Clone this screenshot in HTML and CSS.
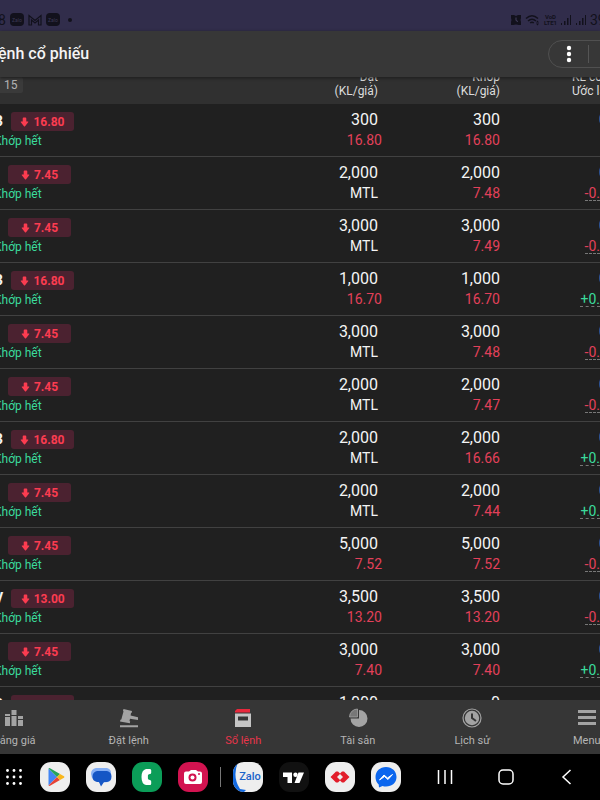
FILE: index.html
```html
<!DOCTYPE html>
<html lang="vi">
<head>
    <meta charset="utf-8">
    <meta name="viewport" content="width=device-width, initial-scale=1">
    <title>Sổ lệnh cổ phiếu</title>
    <link rel="stylesheet" href="styles.css">
</head>
<body>
    <svg class="sprite" aria-hidden="true">
        <symbol id="arrow-down" viewBox="0 0 10 11">
            <path d="M3 1.500Q3 .5 4 .5h2q1 0 1 1V5h1.700q1 0 .4.800L5.600 10.200q-.6.600-1.200 0L.9 5.800Q.3 5 1.300 5H3z" fill="currentColor"/>
        </symbol>
        <symbol id="signal" viewBox="0 0 12 12">
            <path d="M1 9h1v2H1zM4 7h1.500v4H4zM7 4h1.500v7H7zM10 1h1v10h-1z" fill="currentColor"/>
        </symbol>
        <symbol id="zalo-mini" viewBox="0 0 14 14">
            <rect width="14" height="13" rx="4" fill="currentColor"/>
            <text x="7" y="9" text-anchor="middle" font-size="5" fill="#3d3a55">Zalo</text>
        </symbol>
    </svg>

    <div class="status-bar">
        <div class="status-left">
            <span>8</span>
            <svg width="14" height="14"><use href="#zalo-mini"/></svg>
            <svg width="14" height="12" viewBox="0 0 14 12"><path d="M1 11V1.500L7 6.500l6-5V11h-2.500V6L7 9 3.500 6v5z" fill="none" stroke="currentColor" stroke-width="1.200"/></svg>
            <svg width="14" height="14"><use href="#zalo-mini"/></svg>
            <i class="status-dot"></i>
        </div>
        <div class="status-right">
            <svg width="12" height="12" viewBox="0 0 12 12"><path d="M1 1h3l2 1 2-1h3v3l-.5 2 .5 2v3H9l-3-.5L3 11H1V8l.5-2L1 4z" fill="currentColor"/><path d="M6 3.500V6.500l2 1" fill="none" stroke="#45405f"/></svg>
            <svg width="16" height="12" viewBox="0 0 16 12"><path d="M1 4.500Q7-1 13 4.500M3 7q4-3.500 8 0M5.200 9q1.800-1.500 3.600 0" fill="none" stroke="currentColor" stroke-width="1.500"/><path d="M11 8.500L12.500 6.500 14 8.500zM11 9.500h3l-1.500 2z" fill="currentColor"/></svg>
            <span class="volte">VoD<br>LTE1</span>
            <svg width="12" height="12"><use href="#signal"/></svg>
            <svg width="12" height="12"><use href="#signal"/></svg>
            <span>39%</span>
        </div>
    </div>

    <header class="app-header">
        <h1>ệnh cổ phiếu</h1>
        <div class="capsule">
            <button type="button" class="capsule-btn" aria-label="Tùy chọn">
                <svg width="6" height="18" viewBox="0 0 6 18" fill="#fff"><circle cx="3" cy="3" r="2.200"/><circle cx="3" cy="9" r="2.200"/><circle cx="3" cy="15" r="2.200"/></svg>
            </button>
        </div>
    </header>

    <main class="orders">
        <table>
            <colgroup>
                <col>
                <col class="col-order">
                <col class="col-match">
                <col class="col-left">
            </colgroup>
            <thead>
                <tr>
                    <th><span class="count">15</span></th>
                    <th>Đặt<br>(KL/giá)</th>
                    <th>Khớp<br>(KL/giá)</th>
                    <th>KL còn<br>Ước lãi</th>
                </tr>
            </thead>
            <tbody>
                <tr>
                    <td><div class="symbol"><b>B</b><span class="badge"><svg><use href="#arrow-down"/></svg>16.80</span></div><span class="state">Khớp hết</span></td>
                    <td>300<span class="price down">16.80</span></td>
                    <td>300<span class="price down">16.80</span></td>
                    <td><span class="rest">0</span></td>
                </tr>
                <tr>
                    <td><div class="symbol"><b></b><span class="badge"><svg><use href="#arrow-down"/></svg>7.45</span></div><span class="state">Khớp hết</span></td>
                    <td>2,000<span class="price">MTL</span></td>
                    <td>2,000<span class="price down">7.48</span></td>
                    <td><span class="rest">0</span><span class="profit down">-0.</span></td>
                </tr>
                <tr>
                    <td><div class="symbol"><b></b><span class="badge"><svg><use href="#arrow-down"/></svg>7.45</span></div><span class="state">Khớp hết</span></td>
                    <td>3,000<span class="price">MTL</span></td>
                    <td>3,000<span class="price down">7.49</span></td>
                    <td><span class="rest">0</span><span class="profit down">-0.</span></td>
                </tr>
                <tr>
                    <td><div class="symbol"><b>B</b><span class="badge"><svg><use href="#arrow-down"/></svg>16.80</span></div><span class="state">Khớp hết</span></td>
                    <td>1,000<span class="price down">16.70</span></td>
                    <td>1,000<span class="price down">16.70</span></td>
                    <td><span class="rest">0</span><span class="profit up">+0.</span></td>
                </tr>
                <tr>
                    <td><div class="symbol"><b></b><span class="badge"><svg><use href="#arrow-down"/></svg>7.45</span></div><span class="state">Khớp hết</span></td>
                    <td>3,000<span class="price">MTL</span></td>
                    <td>3,000<span class="price down">7.48</span></td>
                    <td><span class="rest">0</span><span class="profit down">-0.</span></td>
                </tr>
                <tr>
                    <td><div class="symbol"><b></b><span class="badge"><svg><use href="#arrow-down"/></svg>7.45</span></div><span class="state">Khớp hết</span></td>
                    <td>2,000<span class="price">MTL</span></td>
                    <td>2,000<span class="price down">7.47</span></td>
                    <td><span class="rest">0</span><span class="profit down">-0.</span></td>
                </tr>
                <tr>
                    <td><div class="symbol"><b>B</b><span class="badge"><svg><use href="#arrow-down"/></svg>16.80</span></div><span class="state">Khớp hết</span></td>
                    <td>2,000<span class="price">MTL</span></td>
                    <td>2,000<span class="price down">16.66</span></td>
                    <td><span class="rest">0</span><span class="profit up">+0.</span></td>
                </tr>
                <tr>
                    <td><div class="symbol"><b></b><span class="badge"><svg><use href="#arrow-down"/></svg>7.45</span></div><span class="state">Khớp hết</span></td>
                    <td>2,000<span class="price">MTL</span></td>
                    <td>2,000<span class="price down">7.44</span></td>
                    <td><span class="rest">0</span><span class="profit up">+0.</span></td>
                </tr>
                <tr>
                    <td><div class="symbol"><b></b><span class="badge"><svg><use href="#arrow-down"/></svg>7.45</span></div><span class="state">Khớp hết</span></td>
                    <td>5,000<span class="price down">7.52</span></td>
                    <td>5,000<span class="price down">7.52</span></td>
                    <td><span class="rest">0</span><span class="profit down">-0.</span></td>
                </tr>
                <tr>
                    <td><div class="symbol"><b>V</b><span class="badge"><svg><use href="#arrow-down"/></svg>13.00</span></div><span class="state">Khớp hết</span></td>
                    <td>3,500<span class="price down">13.20</span></td>
                    <td>3,500<span class="price down">13.20</span></td>
                    <td><span class="rest">0</span><span class="profit down">-0.</span></td>
                </tr>
                <tr>
                    <td><div class="symbol"><b></b><span class="badge"><svg><use href="#arrow-down"/></svg>7.45</span></div><span class="state">Khớp hết</span></td>
                    <td>3,000<span class="price down">7.40</span></td>
                    <td>3,000<span class="price down">7.40</span></td>
                    <td><span class="rest">0</span><span class="profit up">+0.</span></td>
                </tr>
                <tr>
                    <td><div class="symbol"><b>B</b><span class="badge"></span></div></td>
                    <td>1,000</td>
                    <td>0</td>
                    <td></td>
                </tr>
            </tbody>
        </table>
    </main>

    <nav class="tabs">
        <a href="#bang-gia">
            <svg viewBox="0 0 20 20" fill="#a3a3a3"><path d="M1 6h5v2H1zM1 9h5v9H1zM7.500 2h5v5h-5zM7.500 8h5v10h-5zM14 8h5v3h-5zM14 12h5v6h-5z"/></svg>
            Bảng giá
        </a>
        <a href="#dat-lenh">
            <svg viewBox="0 0 20 20" fill="#a3a3a3"><path d="M4.500 1l8.500 2-.3 1.700-.7.300-.4 2.500 7.400 1.800v2.700l-8-1.200-.5 2.200.7.600-.4 1.700L1 13.500l.4-1.700.9-.2L4.500 3.500 4 2.700zM1 17.300h18v2H1z"/></svg>
            Đặt lệnh
        </a>
        <a href="#so-lenh" class="active">
            <svg viewBox="0 0 20 20"><path d="M4 1h13v3.500H2V3z" fill="#e8283c"/><path d="M2 5.500h16V19H2zM5 8.500v4h10v-4z" fill="#c4c4c4" fill-rule="evenodd"/></svg>
            Sổ lệnh
        </a>
        <a href="#tai-san">
            <svg viewBox="0 0 20 20"><path d="M11 2a8.500 8.500 0 1 1-8.500 8.500H11z" fill="#a3a3a3"/><path d="M9.500 1v8H1.500a8 8 0 0 1 8-8z" fill="#777" stroke="#a3a3a3" stroke-width=".8"/></svg>
            Tài sản
        </a>
        <a href="#lich-su">
            <svg viewBox="0 0 20 20"><circle cx="10" cy="10" r="9" fill="none" stroke="#a3a3a3" stroke-width="1.200"/><circle cx="10" cy="10" r="7.200" fill="#a3a3a3"/><path d="M10 5.500V10l4 3" fill="none" stroke="#363636" stroke-width="2"/></svg>
            Lịch sử
        </a>
        <a href="#menu">
            <svg viewBox="0 0 20 20" fill="#a3a3a3"><path d="M1 2h18v3H1zM1 8h18v3H1zM1 14h18v3H1z"/></svg>
            Menu
        </a>
    </nav>

    <div class="taskbar">
        <button type="button" class="drawer" aria-label="Ứng dụng">
            <svg width="20" height="20" viewBox="0 0 20 20" fill="#fff"><circle cx="3.500" cy="3.500" r="1.400"/><circle cx="10" cy="3.500" r="1.400"/><circle cx="16.500" cy="3.500" r="1.400"/><circle cx="3.500" cy="10" r="1.400"/><circle cx="10" cy="10" r="1.400"/><circle cx="16.500" cy="10" r="1.400"/><circle cx="3.500" cy="16.500" r="1.400"/><circle cx="10" cy="16.500" r="1.400"/><circle cx="16.500" cy="16.500" r="1.400"/></svg>
        </button>
        <button type="button" class="app" aria-label="Play Store">
            <svg viewBox="0 0 30 30"><path d="M8.500 6.500v17L17 15z" fill="#4285f4"/><path d="M8.500 6.500q.8-.8 2 0l9.500 5.400-3 3.100z" fill="#27a45a"/><path d="M8.500 23.500q.8.800 2 0l9.500-5.400-3-3.100z" fill="#e64235"/><path d="M20 11.900l4 2.300q.9.800 0 1.600l-4 2.300-3-3.100z" fill="#f9b61b"/></svg>
        </button>
        <button type="button" class="app" aria-label="Messages">
            <svg viewBox="0 0 30 30"><path d="M10 6h11q4 1 4 5v5q0 3-3 4l-8 1-8-5-1-4q0-5 5-6z" fill="#83aef5"/><path d="M11 9h10q4.500 1 4.500 5.500T21 20h-3l-3 4.500-2-4.500h-2q-4.500-1-4.500-5.500T11 9z" fill="#1556c5"/></svg>
        </button>
        <button type="button" class="app phone" aria-label="Phone">
            <svg viewBox="0 0 30 30"><path d="M14 7h4q1.200.2 1.200 1.300v2.500q0 1.200-1.300 1.300-2 .1-2 1.500v3q0 1.400 2 1.500 1.300.1 1.300 1.300v2.300q0 1.300-1.200 1.300h-4q-4.500-1-4.500-8t4.500-8z" fill="#fff"/></svg>
        </button>
        <button type="button" class="app camera" aria-label="Camera">
            <svg viewBox="0 0 30 30"><path d="M8 9.500h3l2-1.500h5l2 1.500h2q2 0 2 2V20q0 2-2 2H8q-2 0-2-2v-8.500q0-2 2-2z" fill="#fff"/><circle cx="14.500" cy="15.500" r="4" fill="#d21350"/><circle cx="14.500" cy="15.500" r="2" fill="#fff"/><circle cx="21" cy="12" r="1" fill="#d21350"/></svg>
        </button>
        <i class="divider"></i>
        <button type="button" class="app" aria-label="Zalo">
            <svg viewBox="0 0 30 30"><path d="M0 0h5Q-1 15 7 27l6 1-2 2H0z" fill="#1269e0"/><text x="17" y="18" text-anchor="middle" font-size="11" font-weight="500" fill="#1b63c9">Zalo</text></svg>
        </button>
        <button type="button" class="app trading" aria-label="TradingView">
            <svg viewBox="0 0 30 30" fill="#fff"><path d="M4 10.500h9V21H8.500v-6H4zM19.500 10.500h5.500L20.500 21H15.500z"/><circle cx="16.500" cy="12.700" r="2.200"/></svg>
        </button>
        <button type="button" class="app" aria-label="Techcombank">
            <svg viewBox="0 0 30 30"><path d="M5.500 15l5.500-5.500h2l2 2 2-2h2l5.500 5.500-5.500 5.500h-2l-2-2-2 2h-2z" fill="#e21d2a"/><path d="M15 12l3 3-3 3-3-3z" fill="#eee"/></svg>
        </button>
        <button type="button" class="app" aria-label="Messenger">
            <svg viewBox="0 0 30 30"><path d="M15 5c6 0 10.500 4.300 10.500 10S21 24.500 15 24.500q-1.800 0-3.500-.5L8 25.500l-.3-3Q4.500 19.500 4.500 15C4.500 9.300 9 5 15 5z" fill="#0b66ee"/><path d="M8.500 18l4.500-5 3.500 3 5-3.500-4.500 5-3.500-3z" fill="#fff" stroke="#fff" stroke-linejoin="round"/></svg>
        </button>
        <div class="sysnav">
            <button type="button" aria-label="Gần đây"><svg width="18" height="18" viewBox="0 0 18 18"><path d="M2.500 2v14M9 2v14M15.500 2v14"/></svg></button>
            <button type="button" aria-label="Trang chủ"><svg width="18" height="18" viewBox="0 0 18 18"><rect x="2" y="2" width="14" height="14" rx="4"/></svg></button>
            <button type="button" aria-label="Quay lại"><svg width="18" height="18" viewBox="0 0 18 18"><path d="M12.500 2L5 9l7.500 7"/></svg></button>
        </div>
    </div>
</body>
</html>
```

FILE: styles.css
```css
* {
    box-sizing: border-box;
}

body {
    display: flex;
    flex-direction: column;
    height: 100vh;
    margin: 0;
    overflow: hidden;
    background: #202020;
    color: #f4f4f4;
    font-family: Roboto, "Noto Sans", sans-serif;
    font-size: 16px;
}

svg {
    flex-shrink: 0;
}

button {
    padding: 0;
    border: 0;
    background: none;
    color: inherit;
    font-family: inherit;
}

.sprite {
    position: absolute;
    width: 0;
    height: 0;
}

/* status bar */
.status-bar {
    display: flex;
    justify-content: space-between;
    flex-shrink: 0;
    height: 31px;
    padding-top: 9px;
    overflow: hidden;
    background: #312d4b;
    color: #12111c;
    font-size: 14px;
}

.status-left,
.status-right {
    display: flex;
    align-items: center;
    height: 22px;
}

.status-left {
    gap: 4px;
    margin-left: -2px;
}

.status-right {
    gap: 3px;
    margin-right: -16px;
}

.status-dot {
    width: 4px;
    height: 4px;
    margin-left: 4px;
    border-radius: 50%;
    background: #12111c;
}

.volte {
    font-size: 6px;
    font-weight: bold;
    line-height: 6px;
    text-align: center;
}

/* title */
.app-header {
    display: flex;
    align-items: center;
    justify-content: space-between;
    flex-shrink: 0;
    height: 46px;
    z-index: 1;
    background: #373737;
    box-shadow: 0 1px 3px #1c1c1c;
}

.app-header h1 {
    margin: 0 0 0 -2px;
    font-size: 16px;
    font-weight: 500;
    line-height: 24px;
}

.capsule {
    width: 82px;
    height: 28px;
    margin-right: -30px;
    border: 1px solid #505050;
    border-radius: 14px;
}

.capsule-btn {
    display: flex;
    align-items: center;
    justify-content: center;
    width: 40px;
    height: 18px;
    margin-top: 4px;
    border-right: 1px solid #555555;
}

/* order list */
.orders {
    flex: 1;
    min-height: 0;
    overflow: hidden;
}

table {
    width: calc(100% + 6px);
    margin: -10px 0 0 -6px;
    table-layout: fixed;
    border-collapse: separate;
    border-spacing: 0;
}

.col-order {
    width: 120px;
}

.col-match {
    width: 122px;
}

.col-left {
    width: 100px;
}

th {
    padding: 3px 0 6px;
    background: #303030;
    color: #dcdcdc;
    font-size: 12px;
    font-weight: normal;
    line-height: 14px;
    text-align: right;
    vertical-align: bottom;
    white-space: nowrap;
}

th:first-child {
    padding-bottom: 11px;
    text-align: left;
}

th:last-child {
    padding-left: 72px;
    text-align: left;
}

.count {
    display: inline-block;
    padding: 2px 5px 2px 10px;
    border-radius: 2px;
    background: #3a3a3a;
    color: #b4b4b4;
    line-height: 12px;
}

td {
    height: 53px;
    padding: 6px 0;
    border-bottom: 1px solid #414141;
    line-height: 20px;
    text-align: right;
    vertical-align: top;
}

td:first-child {
    padding: 8px 0 0;
    text-align: left;
}

.symbol {
    display: flex;
    gap: 8px;
    height: 19px;
}

.symbol b {
    min-width: 6px;
    font-size: 14px;
    line-height: 18px;
}

.badge {
    display: flex;
    align-items: center;
    justify-content: center;
    gap: 4px;
    width: 63px;
    border-radius: 3px;
    background: #4b2230;
    color: #fc3c50;
    font-size: 12px;
    font-weight: bold;
}

.badge svg {
    width: 9px;
    height: 10px;
}

.state {
    display: block;
    color: #3bdb9c;
    font-size: 12px;
}

.price,
.profit {
    display: block;
    font-size: 14px;
}

td:nth-child(2) .down {
    margin-right: -4px;
}

.rest {
    display: block;
    margin-right: -8px;
}

.profit {
    width: max-content;
    height: 18px;
    margin-left: auto;
    border-bottom: 1px dashed #777777;
}

.down {
    color: #e3405a;
}

.up {
    color: #3bdb9c;
}

/* bottom tabs */
.tabs {
    display: grid;
    grid-template-columns: repeat(6, 1fr);
    flex-shrink: 0;
    height: 54px;
    margin: 0 -44px 0 -43px;
    background: #363636;
}

.tabs a {
    display: flex;
    flex-direction: column;
    align-items: center;
    gap: 5px;
    padding-top: 8px;
    color: #b4b4b4;
    font-size: 11px;
    line-height: 16px;
    text-decoration: none;
}

.tabs svg {
    width: 20px;
    height: 20px;
}

.tabs .active {
    color: #e8354b;
}

/* taskbar */
.taskbar {
    display: flex;
    align-items: center;
    gap: 16px;
    flex-shrink: 0;
    height: 46px;
    padding: 0 5px 0 4px;
    background: #000000;
}

.drawer {
    flex-shrink: 0;
    width: 20px;
    height: 20px;
}

.app {
    flex-shrink: 0;
    width: 30px;
    height: 30px;
    overflow: hidden;
    border-radius: 11px;
    background: #eeeeee;
}

.app svg,
.drawer svg {
    display: block;
}

.phone {
    background: #0b9d58;
}

.camera {
    background: #d21350;
}

.trading {
    background: #111111;
}

.divider {
    flex-shrink: 0;
    width: 1px;
    height: 20px;
    margin: 0 -4px;
    background: #777777;
}

.sysnav {
    display: flex;
    gap: 5px;
    margin-left: auto;
}

.sysnav button {
    display: flex;
    justify-content: center;
    width: 56px;
}

.sysnav svg {
    fill: none;
    stroke: #ffffff;
    stroke-width: 1.500;
}
```
